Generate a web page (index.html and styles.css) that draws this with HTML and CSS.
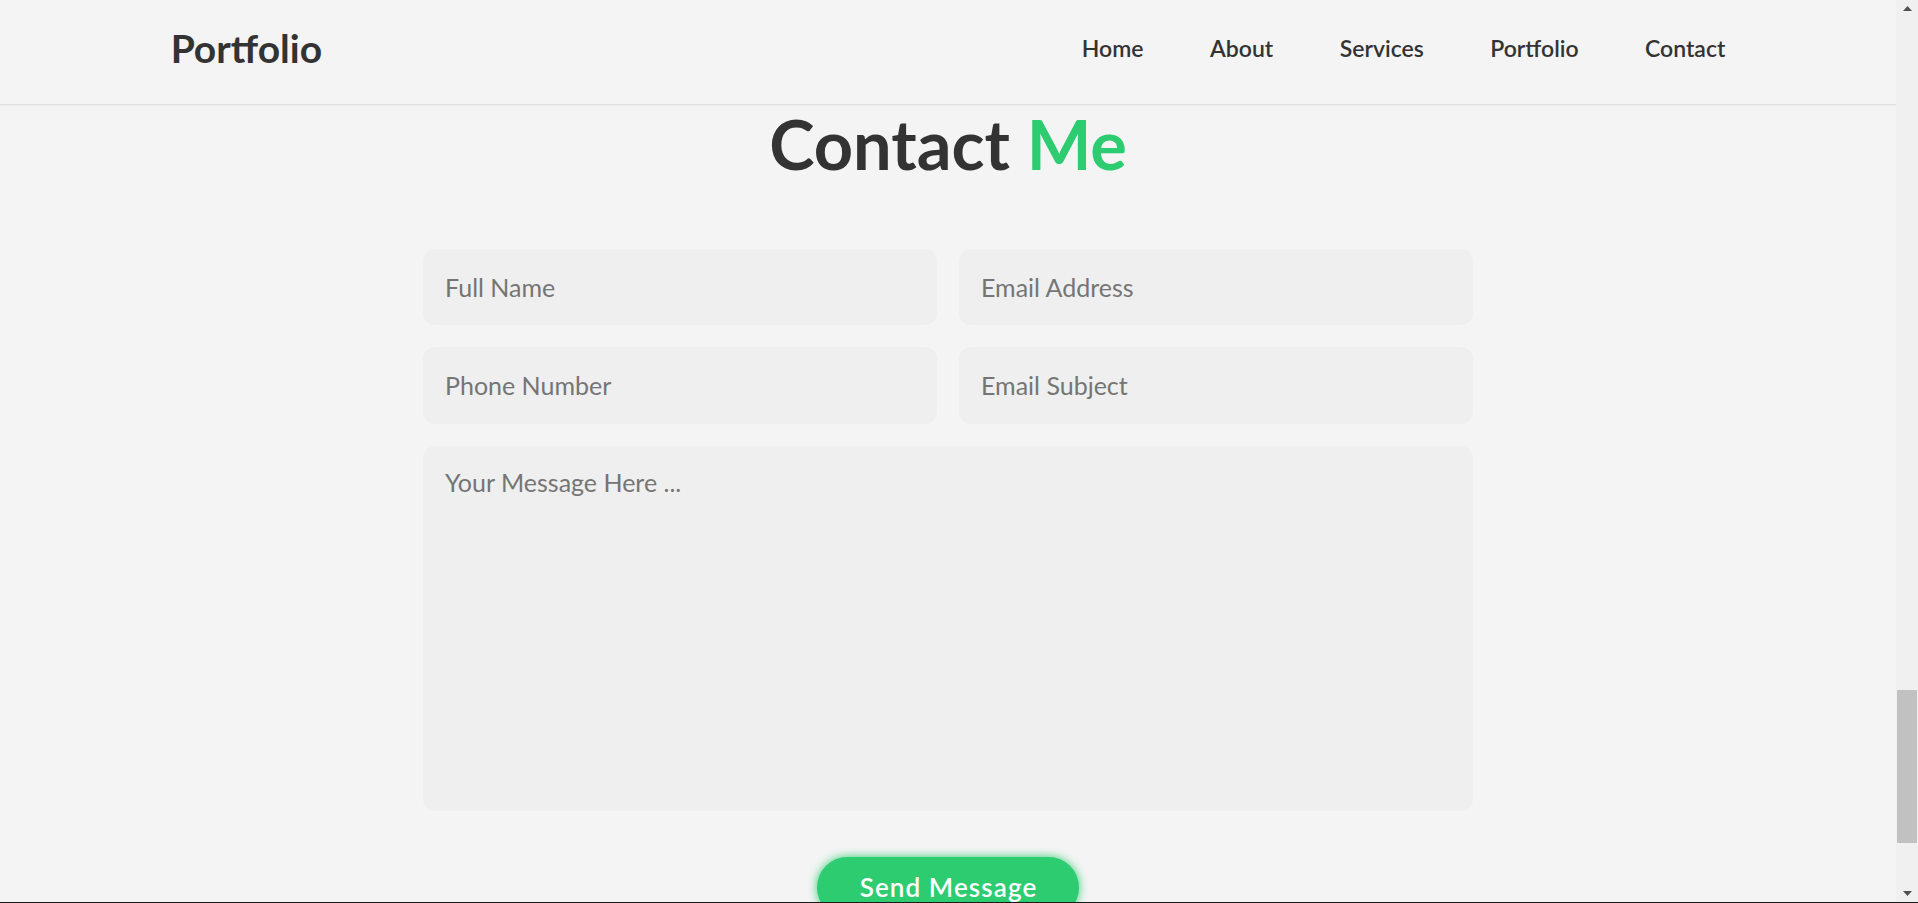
FILE: index.html
```html
<!DOCTYPE html>
<html lang="en">
<head>
<meta charset="utf-8">
<title>Portfolio - Contact</title>
<link rel="stylesheet" href="styles.css">
</head>
<body>
<div class="window">
  <div class="viewport">
    <div class="page">
      <header class="header">
        <a href="#" class="logo">Portfolio</a>
        <nav class="navbar">
          <a href="#">Home</a>
          <a href="#">About</a>
          <a href="#">Services</a>
          <a href="#">Portfolio</a>
          <a href="#">Contact</a>
        </nav>
      </header>
      <section class="contact">
        <h2 class="heading">Contact <span>Me</span></h2>
        <form class="contact-form" action="#">
          <div class="input-box">
            <input type="text" placeholder="Full Name">
            <input type="email" placeholder="Email Address">
          </div>
          <div class="input-box">
            <input type="number" placeholder="Phone Number">
            <input type="text" placeholder="Email Subject">
          </div>
          <textarea placeholder="Your Message Here ..."></textarea>
          <input type="submit" value="Send Message" class="btn">
        </form>
      </section>
    </div>
    <div class="scrollbar">
      <div class="sb-btn">
        <svg width="9" height="5" viewBox="0 0 9 5"><polygon points="0,5 4.5,0 9,5" fill="#505050"/></svg>
      </div>
      <div class="sb-track"><div class="sb-thumb"></div></div>
      <div class="sb-btn">
        <svg width="9" height="5" viewBox="0 0 9 5"><polygon points="0,0 9,0 4.5,5" fill="#505050"/></svg>
      </div>
    </div>
  </div>
  <div class="frame-edge"></div>
</div>
</body>
</html>
```
FILE: styles.css
```css
html, body {
  margin: 0;
  padding: 0;
  height: 100%;
  overflow: hidden;
}

body {
  background: #f4f4f4;
  font-family: Lato, "Noto Sans", sans-serif;
  color: #333;
}

.window {
  height: 903px;
  display: flex;
  flex-direction: column;
}

.viewport {
  flex: 1;
  min-height: 0;
  display: flex;
}

.page {
  flex: 1;
  min-width: 0;
  overflow: hidden;
}

.frame-edge {
  height: 1px;
  background: #1a1a1a;
}

/* header */
.header {
  height: 105px;
  box-sizing: border-box;
  padding: 0 9% 7px;
  border-bottom: 1px solid #dedede;
  box-shadow: 0 1px 2px rgba(0, 0, 0, 0.04);
  display: flex;
  align-items: center;
  justify-content: space-between;
}

.logo {
  font-size: 39px;
  font-weight: 700;
  color: #333;
  text-decoration: none;
  line-height: 1.2;
}

.navbar {
  display: flex;
  gap: 66.5px;
}

.navbar a {
  font-size: 23px;
  font-weight: 600;
  color: #333;
  text-decoration: none;
  line-height: 1.2;
}

/* contact */
.contact {
  padding-top: 5px;
}

.heading {
  margin: 0;
  text-align: center;
  font-size: 68.5px;
  line-height: 1;
  font-weight: 700;
  color: #333;
}

.heading span {
  color: #2ecc71;
}

.contact-form {
  width: 1050px;
  margin: 70px auto 0;
  display: flex;
  flex-direction: column;
}

.input-box {
  display: grid;
  grid-template-columns: 1fr 1fr;
  gap: 22px;
  margin-bottom: 22px;
}

.contact-form input,
.contact-form textarea {
  font-family: Lato, "Noto Sans", sans-serif;
  font-size: 25px;
  color: #333;
  background: #efefef;
  border: none;
  outline: none;
  border-radius: 12px;
  box-sizing: border-box;
  margin: 0;
}

.input-box input {
  height: 76.5px;
  padding: 0 22px;
  width: 100%;
}

.contact-form textarea {
  height: 365px;
  padding: 21px 22px;
  line-height: 1.2;
  resize: none;
  display: block;
}

.contact-form input::placeholder,
.contact-form textarea::placeholder {
  color: #757575;
}

.contact-form .btn {
  align-self: center;
  margin-top: 46px;
  padding: 15px 42px 15px 43px;
  font-size: 26px;
  font-weight: 600;
  letter-spacing: 1.1px;
  line-height: 1.2;
  color: #fff;
  background: #2ecc71;
  border-radius: 40px;
  box-shadow: 0 0 10px #2ecc71;
  cursor: pointer;
}

/* fake window scrollbar */
.scrollbar {
  width: 22px;
  background: #f0f0f0;
  display: flex;
  flex-direction: column;
}

.sb-btn {
  height: 17px;
  display: flex;
  align-items: center;
  justify-content: center;
}

.sb-track {
  flex: 1;
  display: flex;
  flex-direction: column;
  padding: 0 1px;
}

.sb-thumb {
  margin-top: 673px;
  height: 153px;
  background: #c1c1c1;
}
```
